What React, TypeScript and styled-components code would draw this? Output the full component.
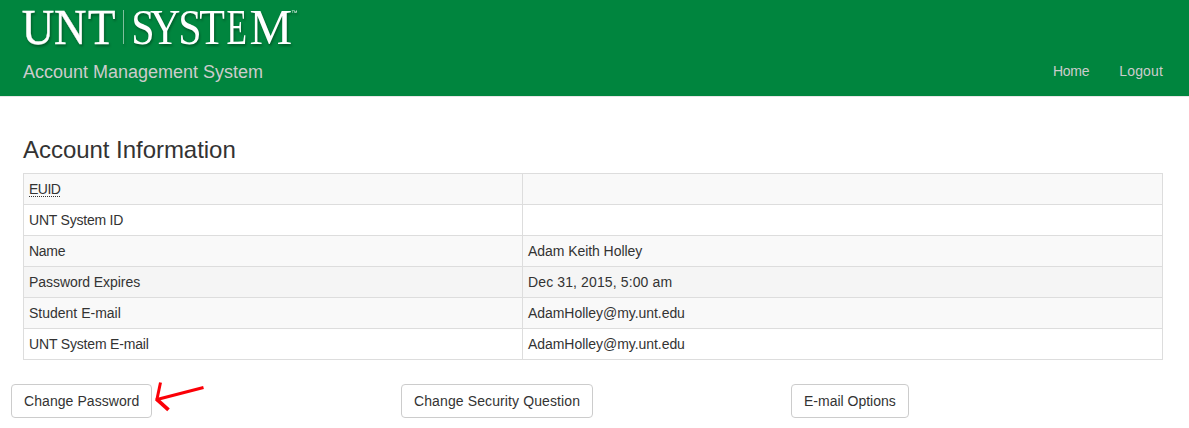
import React from "react";
import styled, { createGlobalStyle } from "styled-components";

const GlobalStyle = createGlobalStyle`
  *, *::before, *::after { box-sizing: border-box; }
  body {
    margin: 0;
    overflow: hidden;
    background: #fff;
    color: #333;
    font: 14px/20px "Liberation Sans", Arial, Helvetica, sans-serif;
  }
`;

const Header = styled.header`
  height: 97px;
  padding: 0 26px 0 22px;
  display: flex;
  justify-content: space-between;
  align-items: flex-end;
  background: #00853e;
  border-bottom: 1px solid #e7e7e7;
`;

const Brand = styled.div`
  height: 96px;
  display: flex;
  flex-direction: column;
`;

const Logo = styled.svg`
  display: block;
  width: 280px;
  height: 62px;
  font-family: "Liberation Serif", "Times New Roman", serif;
  fill: #fff;
  filter: drop-shadow(1px 2px 1px rgba(0, 40, 15, 0.45));
`;

const AppName = styled.span`
  padding-left: 1px;
  font-size: 18px;
  line-height: 20px;
  color: #ccc;
`;

const Nav = styled.nav`
  display: flex;
  gap: 30px;
  padding-bottom: 15px;
`;

const NavLink = styled.a<{ $tracking: number }>`
  color: #ccc;
  text-decoration: none;
  letter-spacing: ${({ $tracking }) => $tracking}px;
`;

const Main = styled.main`
  padding: 40px 26px 0 23px;
`;

const Title = styled.h1`
  margin: 0 0 10px;
  font-size: 24px;
  line-height: 26px;
  font-weight: 500;
  letter-spacing: -0.04px;
`;

const InfoTable = styled.table`
  width: 1140px;
  table-layout: fixed;
  border-collapse: collapse;
  border: 1px solid #ddd;
`;

const InfoRow = styled.tr<{ $shade: string }>`
  height: 31px;
  background: ${({ $shade }) => $shade};
`;

const Cell = styled.td<{ $width?: number; $tracking?: number }>`
  width: ${({ $width }) => ($width ? `${$width}px` : "auto")};
  padding: 5px;
  border: 1px solid #ddd;
  letter-spacing: ${({ $tracking }) => $tracking ?? 0}px;
`;

const Abbr = styled.abbr`
  display: inline-block;
  line-height: 14px;
  text-decoration: none;
  border-bottom: 1px dotted #333;
`;

const Actions = styled.div`
  display: grid;
  grid-template-columns: 390px 390px 390px;
  margin: 24px 0 0 11px;
`;

const Action = styled.div`
  display: flex;
  align-items: flex-start;
`;

const Button = styled.button<{ $tracking?: number }>`
  height: 34px;
  padding: 0 12px;
  border: 1px solid #ccc;
  border-radius: 4px;
  background: #fff;
  color: #333;
  font: inherit;
  letter-spacing: ${({ $tracking }) => $tracking ?? 0}px;
`;

const Arrow = styled.svg`
  width: 54px;
  height: 34px;
  overflow: visible;
  fill: none;
  stroke: #fb0007;
`;

const rows = [
  { label: "EUID", value: "", shade: "#f9f9f9", abbr: true, labelTracking: -0.5 },
  { label: "UNT System ID", value: "", shade: "#fff", labelTracking: -0.22 },
  { label: "Name", value: "Adam Keith Holley", shade: "#f9f9f9", labelTracking: -0.3, valueTracking: -0.06 },
  { label: "Password Expires", value: "Dec 31, 2015, 5:00 am", shade: "#f5f5f5", labelTracking: -0.06, valueTracking: 0.12 },
  { label: "Student E-mail", value: "AdamHolley@my.unt.edu", shade: "#f9f9f9", valueTracking: -0.05 },
  { label: "UNT System E-mail", value: "AdamHolley@my.unt.edu", shade: "#fff", labelTracking: -0.17, valueTracking: -0.05 },
];

export default function App() {
  return (
    <>
      <GlobalStyle />
      <Header>
        <Brand>
          <Logo viewBox="22 0 280 62" aria-label="UNT System">
            <text transform="scale(0.9 1)" x="24.3 60 97.7" y="43.5" fontSize="50" stroke="#fff" strokeWidth="0.4">UNT</text>
            <rect x="123" y="10" width="1" height="34" opacity="0.5" />
            <text transform="scale(0.84 1)" x="156.2 178.7 212.2 237.3" y="43.5" fontSize="50">SYST</text>
            <text transform="scale(0.67 1)" x="338.2" y="43.5" fontSize="50">E</text>
            <text transform="scale(0.96 1)" x="259.8" y="43.5" fontSize="50">M</text>
            <text x="291" y="15" fontSize="6.5" fontFamily="Liberation Sans" opacity="0.85">™</text>
          </Logo>
          <AppName>Account Management System</AppName>
        </Brand>
        <Nav>
          <NavLink $tracking={-0.25}>Home</NavLink>
          <NavLink $tracking={0.15}>Logout</NavLink>
        </Nav>
      </Header>
      <Main>
        <Title>Account Information</Title>
        <InfoTable>
          <tbody>
            {rows.map((r) => (
              <InfoRow key={r.label} $shade={r.shade}>
                <Cell $width={499} $tracking={r.labelTracking}>
                  {r.abbr ? <Abbr>{r.label}</Abbr> : r.label}
                </Cell>
                <Cell $tracking={r.valueTracking}>{r.value}</Cell>
              </InfoRow>
            ))}
          </tbody>
        </InfoTable>
      </Main>
      <Actions>
        <Action>
          <Button $tracking={0.07}>Change Password</Button>
          <Arrow viewBox="152 384 54 34">
            <path d="M203.5 387.5L156 399.8" strokeWidth="3" />
            <path d="M160.5 382.5L156.8 400" strokeWidth="3" />
            <path d="M156.3 398.8L168.5 409.8" strokeWidth="3.8" />
          </Arrow>
        </Action>
        <Action>
          <Button $tracking={0.11}>Change Security Question</Button>
        </Action>
        <Action>
          <Button>E-mail Options</Button>
        </Action>
      </Actions>
    </>
  );
}
